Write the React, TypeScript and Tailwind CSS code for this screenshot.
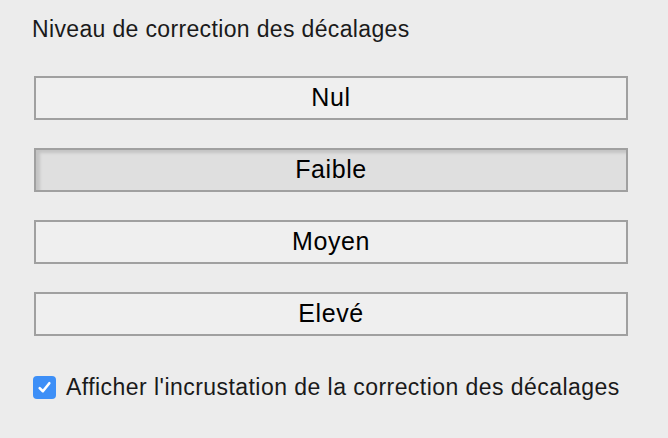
import React, { useState } from "react";

const levels = ["Nul", "Faible", "Moyen", "Elevé"];

const App = () => {
  const [selected, setSelected] = useState("Faible");
  const [showOverlay, setShowOverlay] = useState(true);

  return (
    <div className="h-[438px] w-[668px] bg-[#ececec] font-['Liberation_Sans',Arial,sans-serif] text-[#1a1a1a]">
      <div className="px-[32px] pt-[15px]">
        <h3 className="text-[23px] leading-[28px] tracking-[0.35px]">
          Niveau de correction des décalages
        </h3>
        <div className="mt-[33px] flex w-[596px] flex-col gap-[28px] pl-[2px]">
          {levels.map((level) => (
            <button
              key={level}
              type="button"
              onClick={() => setSelected(level)}
              className={
                selected === level
                  ? "h-[44px] w-full border-2 border-[#a0a0a0] bg-[#dfdfdf] text-[25px] tracking-[0.6px] text-black shadow-[inset_4px_3px_3px_rgba(0,0,0,0.12)]"
                  : "h-[44px] w-full border-2 border-[#a0a0a0] bg-[#efefef] text-[25px] tracking-[0.6px] text-black"
              }
            >
              {level}
            </button>
          ))}
        </div>
        <label className="mt-[37px] flex cursor-pointer items-center gap-[10px] pl-px">
          <input
            type="checkbox"
            checked={showOverlay}
            onChange={(e) => setShowOverlay(e.target.checked)}
            className="hidden"
          />
          <span
            className={
              showOverlay
                ? "flex h-[23px] w-[23px] items-center justify-center rounded-[4px] bg-[#3d8ff7]"
                : "flex h-[23px] w-[23px] items-center justify-center rounded-[4px] border border-[#a0a0a0] bg-white"
            }
          >
            {showOverlay && (
              <svg width="15" height="15" viewBox="0 0 14 14">
                <path
                  d="M2.5 7.5 L5.5 10.5 L11.5 3"
                  fill="none"
                  stroke="white"
                  strokeWidth="2.4"
                  strokeLinecap="round"
                  strokeLinejoin="round"
                />
              </svg>
            )}
          </span>
          <span className="text-[23px] leading-[28px] tracking-[0.45px]">
            Afficher l'incrustation de la correction des décalages
          </span>
        </label>
      </div>
    </div>
  );
};

export default App;
